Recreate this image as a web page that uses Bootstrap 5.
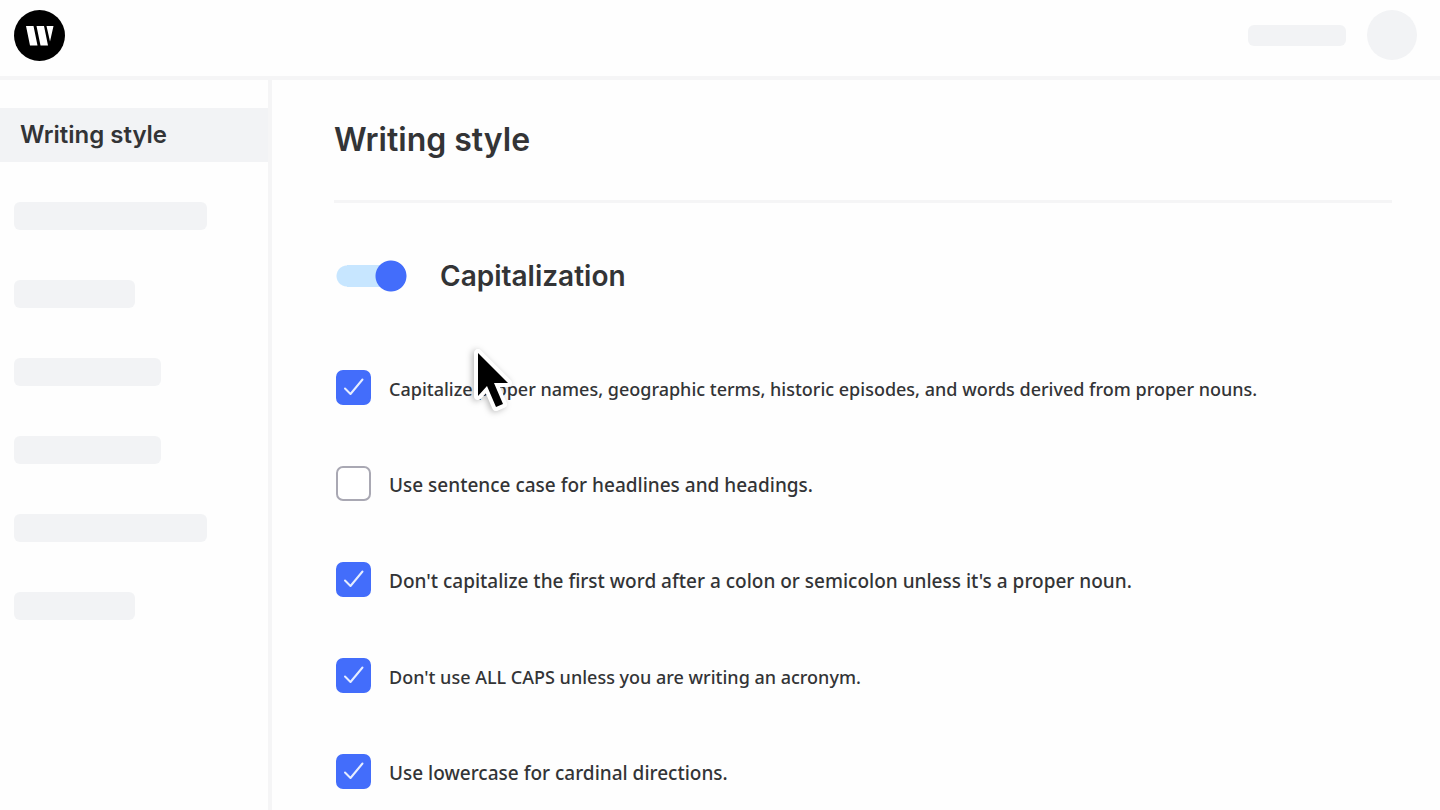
<!DOCTYPE html>
<html lang="en">
<head>
<meta charset="utf-8">
<meta name="viewport" content="width=device-width, initial-scale=1">
<title>Writing style</title>
<link rel="stylesheet" href="https://cdn.jsdelivr.net/npm/bootstrap@5.3.0/dist/css/bootstrap.min.css">
<style>
  :root { --line: #f5f5f6; --fill: #f2f3f5; --ink: #333436; --brand: #436dfb; }
  body { font-family: "Noto Sans", "Open Sans", sans-serif; color: var(--ink); background: #fefefe; }
  h1, h2, .side-link { font-family: Inter, "Open Sans", sans-serif; font-weight: 600; }
  .topbar { height: 80px; padding: 0 23px 6px 14px; border-bottom: 4px solid var(--line); }
  .top-ghosts { gap: 21px; }
  .ghost { background: var(--fill); border-radius: 6px; height: 28px; }
  .ghost-name { width: 98px; height: 21px; }
  .ghost-avatar { width: 50px; height: 50px; border-radius: 50%; }
  .ghost-lg { width: 193px; }
  .ghost-md { width: 147px; }
  .ghost-sm { width: 121px; }
  .sidebar { width: 272px; border-right: 4px solid var(--line); padding-top: 28px; }
  .side-link { background: var(--fill); color: var(--ink); font-size: 24px; line-height: 54px; padding-left: 20px; }
  .ghost-list { gap: 50px; padding: 40px 14px; }
  .content { padding: 40px 48px 20px 62px; min-width: 0; }
  h1 { font-size: 32px; line-height: 40px; padding-bottom: 40px; border-bottom: 3px solid var(--line); }
  h2 { font-size: 28px; line-height: 40px; }
  .toggle-row { gap: 33px; padding: 53px 0 0 2px; }
  .toggle { appearance: none; width: 71px; height: 32px; border-radius: 16px; cursor: pointer;
    background: radial-gradient(circle at 55px 16px, var(--brand) 15px, transparent 16px),
      linear-gradient(#c7e6ff, #c7e6ff) 11px 5px / 43px 22px no-repeat,
      radial-gradient(circle at 11px 16px, #c7e6ff 10px, transparent 11px); }
  .rules { gap: 61px; padding: 74px 0 0 2px; }
  .rule { gap: 18px; }
  .rules .form-check-input { width: 35px; height: 35px; border: 2px solid #a9a8b3; border-radius: 7px; background-color: #fff; }
  .rules .form-check-input:checked { background-color: var(--brand); border-color: var(--brand);
    background-size: 35px 35px; background-position: center;
    background-image: url("data:image/svg+xml,%3Csvg xmlns='http://www.w3.org/2000/svg' viewBox='0 0 35 35'%3E%3Cpath fill='none' stroke='%23e6edff' stroke-width='2' stroke-linecap='round' stroke-linejoin='round' d='M9 18.500l5.500 5.500L26.500 9.500'/%3E%3C/svg%3E"); }
  .rules label { font-size: 19px; line-height: 35px; font-weight: 500; padding-top: 2px; margin-bottom: -2px; }
  .rules .compact { font-size: 18px; }
  .pointer { left: 132px; top: -28px; width: 56px; height: 72px; pointer-events: none; filter: drop-shadow(-2px 1px 3px #0004); }
</style>
</head>
<body>
<div class="vh-100 d-flex flex-column overflow-hidden">
  <header class="topbar d-flex align-items-center justify-content-between flex-shrink-0">
    <a href="#" aria-label="Home" class="d-flex">
      <svg width="51" height="51" viewBox="0 0 51 51" aria-hidden="true">
        <circle cx="25.500" cy="25.500" r="25.500"/>
        <path fill="#fff" d="M12 16h7.500l4 19.500H16zM22.500 16H30l4 19.500h-7.500zM32.500 16h7l-3.500 15.500z"/>
      </svg>
    </a>
    <div class="top-ghosts d-flex align-items-center">
      <div class="ghost ghost-name"></div>
      <div class="ghost ghost-avatar"></div>
    </div>
  </header>
  <div class="d-flex flex-grow-1">
    <nav class="sidebar flex-shrink-0" aria-label="Settings">
      <a href="#" class="side-link d-block text-decoration-none" aria-current="page">Writing style</a>
      <div class="ghost-list d-flex flex-column">
        <div class="ghost ghost-lg"></div>
        <div class="ghost ghost-sm"></div>
        <div class="ghost ghost-md"></div>
        <div class="ghost ghost-md"></div>
        <div class="ghost ghost-lg"></div>
        <div class="ghost ghost-sm"></div>
      </div>
    </nav>
    <main class="content flex-grow-1">
      <h1 class="mb-0">Writing style</h1>
      <div class="toggle-row d-flex align-items-center">
        <input type="checkbox" role="switch" class="toggle" id="caps" checked>
        <h2 class="mb-0"><label for="caps">Capitalization</label></h2>
      </div>
      <div class="rules d-flex flex-column">
        <div class="rule d-flex position-relative">
          <input class="form-check-input m-0 flex-shrink-0" type="checkbox" id="r1" checked>
          <label class="compact" for="r1">Capitalize proper names, geographic terms, historic episodes, and words derived from proper nouns.</label>
          <svg class="pointer position-absolute" viewBox="0 0 56 72" aria-hidden="true">
            <path d="M10 11v43l9-10 9 21 7-3-9-21h14z" stroke="#fff" stroke-width="8" stroke-linejoin="round" paint-order="stroke"/>
          </svg>
        </div>
        <div class="rule d-flex">
          <input class="form-check-input m-0 flex-shrink-0" type="checkbox" id="r2">
          <label for="r2">Use sentence case for headlines and headings.</label>
        </div>
        <div class="rule d-flex">
          <input class="form-check-input m-0 flex-shrink-0" type="checkbox" id="r3" checked>
          <label for="r3">Don't capitalize the first word after a colon or semicolon unless it's a proper noun.</label>
        </div>
        <div class="rule d-flex">
          <input class="form-check-input m-0 flex-shrink-0" type="checkbox" id="r4" checked>
          <label class="compact" for="r4">Don't use ALL CAPS unless you are writing an acronym.</label>
        </div>
        <div class="rule d-flex">
          <input class="form-check-input m-0 flex-shrink-0" type="checkbox" id="r5" checked>
          <label for="r5">Use lowercase for cardinal directions.</label>
        </div>
      </div>
    </main>
  </div>
</div>
<script src="https://cdn.jsdelivr.net/npm/bootstrap@5.3.0/dist/js/bootstrap.bundle.min.js"></script>
</body>
</html>
